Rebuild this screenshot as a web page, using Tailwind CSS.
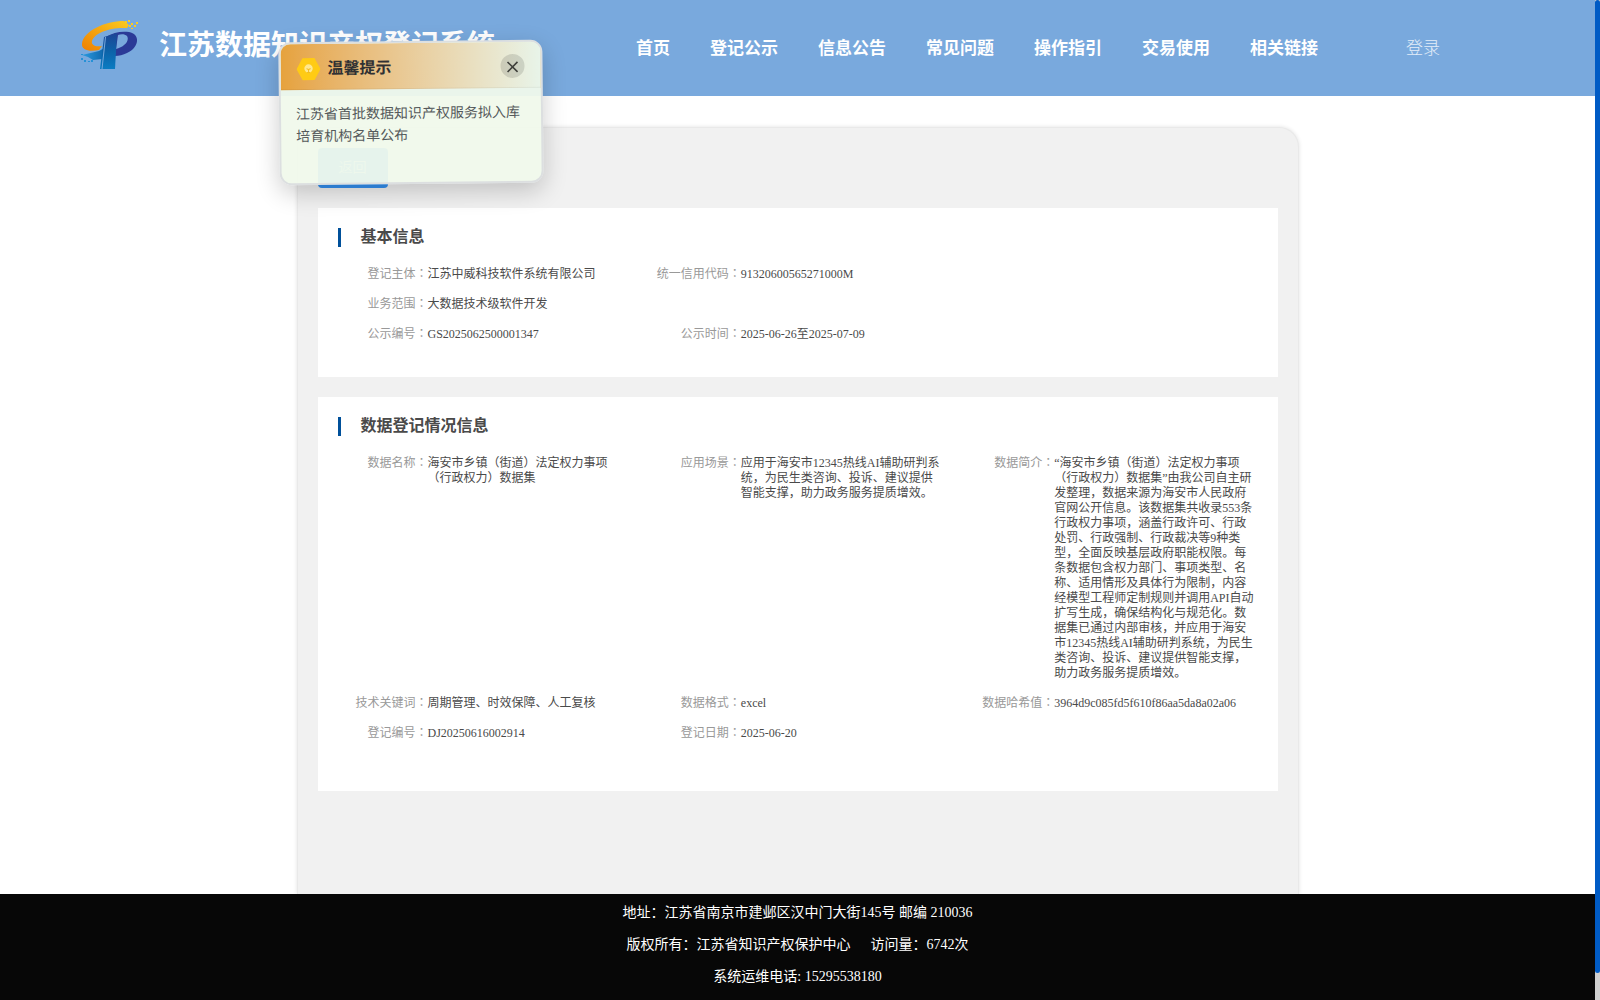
<!DOCTYPE html>
<html lang="zh-CN">
<head>
<meta charset="utf-8">
<title>江苏数据知识产权登记系统</title>
<script src="https://cdn.jsdelivr.net/npm/@tailwindcss/browser@4"></script>
</head>
<body class="relative flex h-[1000px] w-[1600px] overflow-hidden bg-white font-['Liberation_Serif','Noto_Sans_CJK_SC',serif]">
<div class="flex h-full w-[1595px] flex-col">
  <header class="flex h-24 shrink-0 items-center bg-[#79a9dd] pl-20 text-white">
    <svg class="mt-[-6px] h-[52px] w-[60px]" viewBox="0 0 60 52">
      <defs>
        <linearGradient id="o" x1="0" y1="1" x2="1" y2="0"><stop offset="0" stop-color="#ee7f00"/><stop offset="1" stop-color="#fccb20"/></linearGradient>
        <linearGradient id="b" x1="0" y1="0" x2="0" y2="1"><stop offset="0" stop-color="#1d4596"/><stop offset=".5" stop-color="#0c62a8"/><stop offset="1" stop-color="#0a7cc2"/></linearGradient>
        <linearGradient id="c" x1="0" y1="0" x2="1" y2="0"><stop offset="0" stop-color="#2b9be0"/><stop offset="1" stop-color="#0c62a8"/></linearGradient>
      </defs>
      <path d="M44 2C25 2 3 12 2 25c-.5 6 7 8 17 6l3-4c-7 1-11-1-10-5C14 14 30 8 47 9l2-3z" fill="url(#o)"/>
      <path d="M45 2h2v2h-2zM48 1h2v2h-2zM51 4h2v2h-2zM49 6h2v2h-2zM54 6h2v2h-2zM56 3h2v2h-2zM51 9h2v1h-2z" fill="#fccb20"/>
      <path fill-rule="evenodd" d="M26 18c7-5 16-6 23-5 12 2 10 16-2 21-4 2-8 3-12 3l1-22zM36 30c8-2 14-8 11-13-2-2-6-2-9-1z" fill="#2b3a97"/>
      <path d="M2 36l17-4 7-4v8l-4 4-9 1-5-3z" fill="url(#c)"/>
      <path d="M24 18l13-4-2 36H20z" fill="url(#b)"/>
      <path d="M25.500 18l-3.500 32" stroke="#79a9dd" stroke-width="1"/>
      <path d="M1 39h2v2H1zM4 41h2v2H4zM8 42h2v1H8zM11 41h2v2h-2zM1 35h2v1H1z" fill="#2591d6"/>
    </svg>
    <div class="ml-[19px] -mt-1 w-[477px] whitespace-nowrap text-[28px] leading-none font-bold">江苏数据知识产权登记系统</div>
    <nav class="mt-px flex gap-10 whitespace-nowrap text-[17px] font-bold"><a>首页</a><a>登记公示</a><a>信息公告</a><a>常见问题</a><a>操作指引</a><a>交易使用</a><a>相关链接</a></nav>
    <a class="mt-px ml-[88px] text-[17px] font-light text-white/80">登录</a>
  </header>

  <main class="mx-auto mt-[31px] flex min-h-0 w-[1002px] flex-1 flex-col rounded-t-[20px] border border-b-0 border-[#e9e9e9] bg-[#f1f1f1] px-5 pt-5 shadow-[0_0_4px_rgba(0,0,0,0.12)]">
    <button class="h-10 w-[70px] shrink-0 rounded bg-[#3390f0] text-sm font-light text-white/80">返回</button>

    <section class="mt-5 h-[169px] shrink-0 bg-white pt-5 pl-5 text-xs leading-[15px] text-[#4a4a4a]">
      <h2 class="flex h-[19px] items-center border-l-3 border-[#00509a] pl-5 text-base leading-[18px] font-bold"><span class="-mt-px">基本信息</span></h2>
      <div class="mt-5 grid auto-rows-[15px] grid-cols-3 gap-y-[15px] whitespace-nowrap">
        <div class="flex"><span class="w-[90px] shrink-0 text-right text-[#999]">登记主体<span lang="zh-TW" class="font-['Noto_Sans_CJK_TC'] leading-none">：</span></span><p>江苏中威科技软件系统有限公司</p></div>
        <div class="col-span-2 flex"><span class="w-[90px] shrink-0 text-right text-[#999]">统一信用代码<span lang="zh-TW" class="font-['Noto_Sans_CJK_TC'] leading-none">：</span></span><p>91320600565271000M</p></div>
        <div class="col-span-3 flex"><span class="w-[90px] shrink-0 text-right text-[#999]">业务范围<span lang="zh-TW" class="font-['Noto_Sans_CJK_TC'] leading-none">：</span></span><p>大数据技术级软件开发</p></div>
        <div class="flex"><span class="w-[90px] shrink-0 text-right text-[#999]">公示编号<span lang="zh-TW" class="font-['Noto_Sans_CJK_TC'] leading-none">：</span></span><p>GS2025062500001347</p></div>
        <div class="flex"><span class="w-[90px] shrink-0 text-right text-[#999]">公示时间<span lang="zh-TW" class="font-['Noto_Sans_CJK_TC'] leading-none">：</span></span><p>2025-06-26至2025-07-09</p></div>
      </div>
    </section>

    <section class="mt-5 h-[394px] shrink-0 bg-white pt-5 pl-5 text-xs leading-[15px] text-[#4a4a4a]">
      <h2 class="flex h-[19px] items-center border-l-3 border-[#00509a] pl-5 text-base leading-[18px] font-bold"><span class="-mt-px">数据登记情况信息</span></h2>
      <div class="mt-5 grid grid-cols-3 grid-rows-[225px_15px_15px] gap-y-[15px] whitespace-nowrap">
        <div class="flex"><span class="w-[90px] shrink-0 text-right text-[#999]">数据名称<span lang="zh-TW" class="font-['Noto_Sans_CJK_TC'] leading-none">：</span></span><p>海安市乡镇（街道）法定权力事项<br>（行政权力）数据集</p></div>
        <div class="flex"><span class="w-[90px] shrink-0 text-right text-[#999]">应用场景<span lang="zh-TW" class="font-['Noto_Sans_CJK_TC'] leading-none">：</span></span><p>应用于海安市12345热线AI辅助研判系<br>统，为民生类咨询、投诉、建议提供<br>智能支撑，助力政务服务提质增效。</p></div>
        <div class="flex"><span class="w-[90px] shrink-0 text-right text-[#999]">数据简介<span lang="zh-TW" class="font-['Noto_Sans_CJK_TC'] leading-none">：</span></span><p>“海安市乡镇（街道）法定权力事项<br>（行政权力）数据集”由我公司自主研<br>发整理，数据来源为海安市人民政府<br>官网公开信息。该数据集共收录553条<br>行政权力事项，涵盖行政许可、行政<br>处罚、行政强制、行政裁决等9种类<br>型，全面反映基层政府职能权限。每<br>条数据包含权力部门、事项类型、名<br>称、适用情形及具体行为限制，内容<br>经模型工程师定制规则并调用API自动<br>扩写生成，确保结构化与规范化。数<br>据集已通过内部审核，并应用于海安<br>市12345热线AI辅助研判系统，为民生<br>类咨询、投诉、建议提供智能支撑，<br>助力政务服务提质增效。</p></div>
        <div class="flex"><span class="w-[90px] shrink-0 text-right text-[#999]">技术关键词<span lang="zh-TW" class="font-['Noto_Sans_CJK_TC'] leading-none">：</span></span><p>周期管理、时效保障、人工复核</p></div>
        <div class="flex"><span class="w-[90px] shrink-0 text-right text-[#999]">数据格式<span lang="zh-TW" class="font-['Noto_Sans_CJK_TC'] leading-none">：</span></span><p>excel</p></div>
        <div class="flex"><span class="w-[90px] shrink-0 text-right text-[#999]">数据哈希值<span lang="zh-TW" class="font-['Noto_Sans_CJK_TC'] leading-none">：</span></span><p>3964d9c085fd5f610f86aa5da8a02a06</p></div>
        <div class="flex"><span class="w-[90px] shrink-0 text-right text-[#999]">登记编号<span lang="zh-TW" class="font-['Noto_Sans_CJK_TC'] leading-none">：</span></span><p>DJ20250616002914</p></div>
        <div class="flex"><span class="w-[90px] shrink-0 text-right text-[#999]">登记日期<span lang="zh-TW" class="font-['Noto_Sans_CJK_TC'] leading-none">：</span></span><p>2025-06-20</p></div>
      </div>
    </section>
  </main>

  <footer class="z-10 h-[106px] shrink-0 bg-[#070707] pt-[3px] text-center text-sm leading-8 text-white">
    <p>地址：江苏省南京市建邺区汉中门大街145号 邮编 210036</p>
    <p>版权所有：江苏省知识产权保护中心<span class="ml-5">访问量：6742次</span></p>
    <p>系统运维电话: 15295538180</p>
  </footer>
</div>

<!-- scrollbar -->
<div class="h-full w-[5px] bg-[#cfcfcf]"><div class="h-[973px] rounded-[3px] bg-[#005bc5]"></div></div>

<!-- floating notice -->
<aside class="absolute top-[41px] left-[279px] z-20 h-[143px] w-[264px] rotate-[-0.6deg] overflow-hidden rounded-xl border-2 border-[#dcdfe0] bg-[#f0f9eb]/95 shadow-[0_8px_24px_rgba(0,0,0,0.2)]">
  <div class="flex h-[46px] items-center border-b border-black/5 bg-linear-to-r from-[#e6a23c] to-[#e8f4e9] pr-4 pl-4">
    <svg class="mt-1 h-6 w-6" viewBox="0 0 24 24"><path d="M6 1h12l6 11-6 11H6L0 12z" fill="#ffcb14"/><circle cx="12" cy="11.500" r="4.200" fill="#ffe890"/><path d="M10 11.500l2 1 2-1M12 12v3M10.500 15.500h3" fill="none" stroke="#f2bc22"/></svg>
    <h3 class="mt-1 ml-[7px] flex-1 text-base font-bold text-[#303133]">温馨提示</h3>
    <span class="mt-0.5 flex h-6 w-6 items-center justify-center rounded-full bg-black/12"><svg class="mt-0.5 h-3 w-3" viewBox="0 0 12 12"><path d="M1 1l10 10M11 1L1 11" stroke="#3f403b" stroke-width="1.600"/></svg></span>
  </div>
  <p class="pt-[14px] pl-[15px] text-sm leading-[22.400px] whitespace-nowrap text-[#55595b]">江苏省首批数据知识产权服务拟入库<br>培育机构名单公布</p>
</aside>
</body>
</html>
